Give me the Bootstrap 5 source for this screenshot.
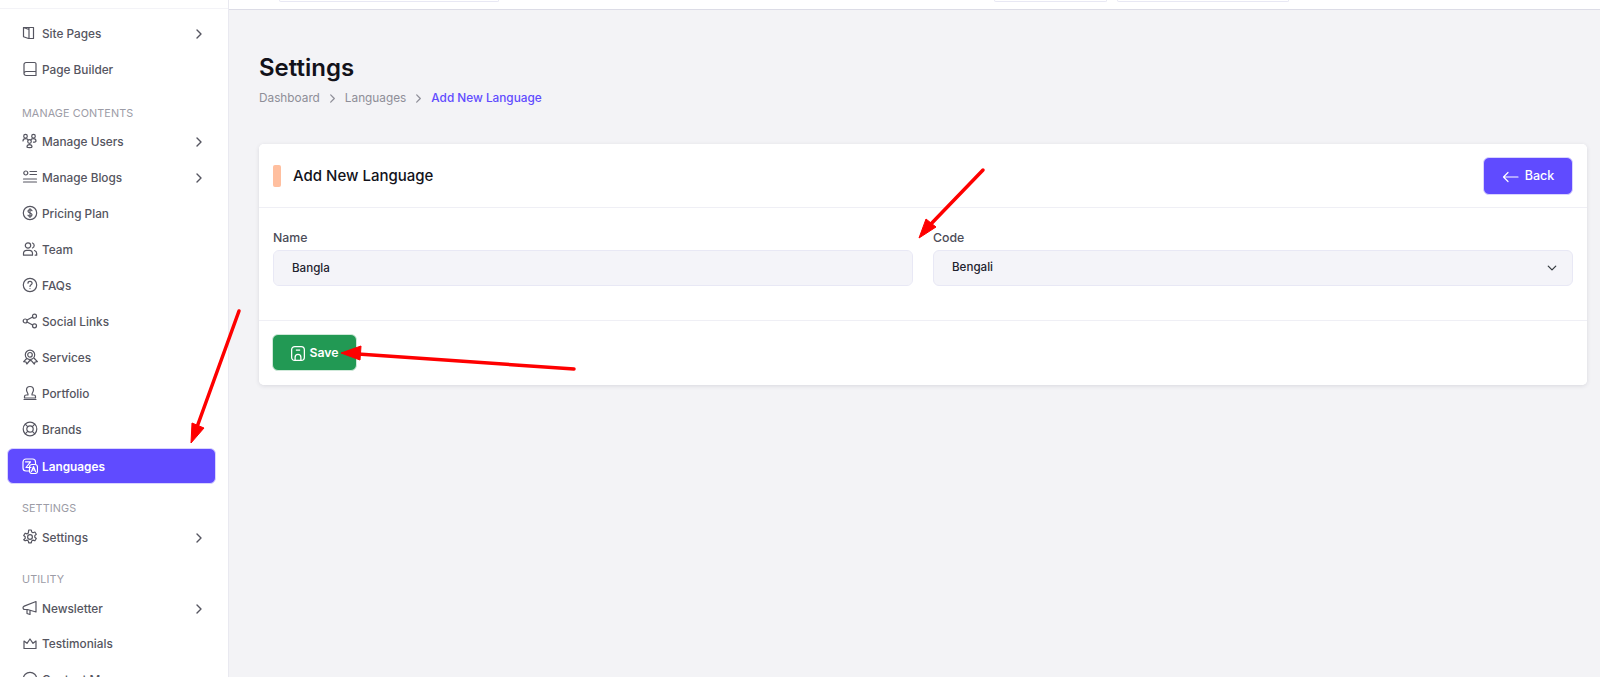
<!doctype html>
<html lang="en">
<head>
<meta charset="utf-8">
<title>Add New Language</title>
<link href="https://cdn.jsdelivr.net/npm/bootstrap@5.3.0/dist/css/bootstrap.min.css" rel="stylesheet">
<style>
html,body{height:677px;overflow:hidden}
body{font-family:Inter,"Liberation Sans",sans-serif;background:#f3f3f6;font-size:13px;color:#12121a}
.shell{height:677px;position:relative}
.side{width:229px;flex:none;background:#fff;border-right:1px solid #e9e9f0;height:677px;overflow:hidden;padding:0 12px 0 8px}
.side-top{height:9px;margin:0 -12px 7px -8px;border-bottom:1px solid #f3f3f7}
.side-item{display:flex;align-items:center;height:35px;margin-bottom:1px;padding:2px 14px 0;color:#555560;font-weight:500;font-size:11.8px;text-decoration:none;border-radius:6px;white-space:nowrap}
.side-item svg.ico{width:16px;height:16px;margin-right:4px;flex:none;fill:none;stroke:currentColor;stroke-width:1.2;stroke-linecap:round;stroke-linejoin:round;position:relative;top:-2px}
.side-item .chev{margin-left:auto;width:10px;height:10px;fill:none;stroke:#555560;stroke-width:1.4;stroke-linecap:round;stroke-linejoin:round;margin-right:-2px;position:relative;top:-1px}
.side-item.on{background:#604bff;color:#fff;border:1px solid #d9d4ff;font-weight:600;padding:3px 13px 0 14px;height:36px;margin:0 0 0 -1px}
.side-head{padding:0 14px;font-size:10.8px;line-height:18px;color:#9c9ca6;text-transform:uppercase;letter-spacing:.1px}
.h-a{padding-top:17px;padding-bottom:1px}
.h-b{padding-top:16px;padding-bottom:2px}
.h-c{padding-top:15px;padding-bottom:2px}
.tight{margin-bottom:0}
.main-col{min-width:0}
.topstrip{height:10px;background:#fff;border-bottom:1px solid #dcdce6;overflow:hidden;display:flex;padding-left:50px}
.stub{height:2px;background:#fff;border:1px solid #e8e8f4;border-top:0;border-radius:0 0 5px 5px}
.stub-a{width:220px}
.stub-b{width:113px;margin-left:auto}
.stub-c{width:172px;margin-left:10px;margin-right:311px}
.page-wrap{padding:40px 13px 0 30px}
.page-title{font-size:24px;font-weight:600;line-height:36px;margin:0 0 2px;color:#12121a}
.crumbs{margin:0 0 36px;font-size:11.8px;line-height:20px;align-items:center}
.crumbs .crumb-link{color:#8e8e98;text-decoration:none}
.crumbs .crumb-now{color:#604bff;font-weight:500}
.crumb-sep{width:9px;height:9px;margin:0 8px;fill:none;stroke:#8e8e98;stroke-width:1.4;stroke-linecap:round;stroke-linejoin:round}
.form-card{--bs-card-border-color:transparent;--bs-card-border-radius:5px;--bs-card-inner-border-radius:5px;box-shadow:0 1px 4px rgba(30,30,60,.12);border:0}
.form-card .card-header{height:64px;background:#fff;border-bottom:1px solid #efeff5;padding:0 14px 0;display:flex;align-items:center}
.tick{width:8px;height:22px;background:#ffbf9f;border-radius:2px;margin-right:12px}
.card-ttl{font-size:15px;font-weight:500;margin:0;color:#12121a}
.btn-back{height:38px;width:90px;background:#604bff;border:1px solid #d9d4ff;color:#fff;border-radius:6px;font-size:12.5px;font-weight:500;display:flex;align-items:center;justify-content:center;gap:6px;padding:2px 0 0}
.btn-back:hover{background:#604bff;color:#fff}
.btn-back svg{width:17px;height:12px;fill:none;stroke:#fff;stroke-width:1.2;stroke-linecap:round;stroke-linejoin:round}
.form-card .card-body{padding:20px 14px 0;height:112px;flex:none}
.fld-row{--bs-gutter-x:20px}
.fld-lbl{font-size:12.3px;font-weight:500;color:#4c4c58;line-height:20px;margin-bottom:2px}
.fld{height:36px;background-color:#f4f4f9;border:1px solid #e8e8f5;border-radius:6px;font-size:11.6px;font-weight:500;color:#22222e;padding:0 18px}
.form-select.fld{background-size:12px 10px;background-position:right 14px center}
.form-card .card-footer{background:#fff;border-top:1px solid #efeff5;padding:13px;height:65px}
.btn-save{height:37px;width:85px;background:#229954;border:1px solid #cfe9d9;color:#fff;border-radius:6px;font-size:12.3px;font-weight:600;display:flex;align-items:center;justify-content:center;gap:3px;padding:1px 0 0}
.btn-save:hover{background:#229954;color:#fff}
.btn-save svg{width:16px;height:17px;fill:none;stroke:#fff;stroke-width:1.2;stroke-linejoin:round}
.arrows{position:absolute;left:0;top:0;width:1600px;height:677px;pointer-events:none}
</style>
</head>
<body>
<div class="shell d-flex">
<nav class="side">
<div class="side-top"></div>
<a class="side-item" href="#"><svg class="ico" viewBox="0 0 16 16"><path d="M1.500 2.500h10v11H6.500l-5-1.800zM7 2.500v11M1.500 2.500L7 4.500v9"/></svg>Site Pages<svg class="chev" viewBox="0 0 10 10"><path d="M3 1l4 4-4 4"/></svg></a>
<a class="side-item" href="#"><svg class="ico" viewBox="0 0 16 16"><path d="M4 1.500h8.500a1.500 1.500 0 0 1 1.500 1.500v11.500H4a2 2 0 0 1-2-2V3.500A2 2 0 0 1 4 1.500zM2 12.500a2 2 0 0 1 2-2h10"/></svg>Page Builder</a>
<div class="side-head h-a">Manage Contents</div>
<a class="side-item" href="#"><svg class="ico" viewBox="0 0 16 16"><circle cx="3.500" cy="3.200" r="1.800"/><circle cx="11.500" cy="3.200" r="1.800"/><circle cx="7.500" cy="8.500" r="1.800"/><path d="M1 8c0-1.500 1-2.400 2.500-2.400S6 6.500 6 7M9 7c0-.5 1-1.400 2.500-1.400S14 6.500 14 8c0 .8-1 1.200-2.500 1.200M5 14c0-1.500 1-2.300 2.500-2.300S10 12.500 10 14c0 .8-5 .8-5 0z"/></svg>Manage Users<svg class="chev" viewBox="0 0 10 10"><path d="M3 1l4 4-4 4"/></svg></a>
<a class="side-item" href="#"><svg class="ico" viewBox="0 0 16 16"><circle cx="3.800" cy="4" r="2"/><path d="M8 2.500h6.500M8 5.500h6.500M1.500 10h13M1.500 13h13"/></svg>Manage Blogs<svg class="chev" viewBox="0 0 10 10"><path d="M3 1l4 4-4 4"/></svg></a>
<a class="side-item" href="#"><svg class="ico" viewBox="0 0 16 16"><circle cx="8" cy="8" r="6.700"/><path d="M10 5.700C9.600 5 9 4.700 8 4.700c-1.200 0-2 .6-2 1.600 0 2.200 4 1.200 4 3.400 0 1-.8 1.600-2 1.600-1 0-1.700-.4-2-1.100M8 3.600v8.800"/></svg>Pricing Plan</a>
<a class="side-item" href="#"><svg class="ico" viewBox="0 0 16 16"><circle cx="6" cy="4.500" r="2.700"/><path d="M1.500 14.200v-1.700c0-1.800 1.400-3.200 3.200-3.200h2.600c1.800 0 3.200 1.400 3.200 3.200v1.700zM10.500 2a2.700 2.700 0 0 1 0 5M12.500 9.500c1.300.4 2.200 1.600 2.200 3v1.700h-1.500"/></svg>Team</a>
<a class="side-item" href="#"><svg class="ico" viewBox="0 0 16 16"><circle cx="8" cy="8" r="6.700"/><path d="M6 6.200C6 5 7 4.400 8 4.400c1.200 0 2.100.8 2.100 1.900 0 1.500-2.100 1.500-2.100 3.100M8 11.500v.1"/></svg>FAQs</a>
<a class="side-item" href="#"><svg class="ico" viewBox="0 0 16 16"><circle cx="3.200" cy="8" r="2"/><circle cx="12.500" cy="3.200" r="2"/><circle cx="12.500" cy="12.800" r="2"/><path d="M5 7l5.700-3M5 9l5.700 3"/></svg>Social Links</a>
<a class="side-item" href="#"><svg class="ico" viewBox="0 0 16 16"><circle cx="8" cy="5.800" r="4.700"/><circle cx="8" cy="5.800" r="2.300"/><path d="M4.700 9.500l-3 3.200 2.300.3.800 2 3-3.500 1.500.1 3 3.400.8-2 2.300-.3-3-3.200"/></svg>Services</a>
<a class="side-item" href="#"><svg class="ico" viewBox="0 0 16 16"><path d="M2 14.500h12M2.500 11.500c0-1 .7-1.500 1.700-1.500H6c.5-1.500-1.500-3-1.500-5a3.500 3.500 0 0 1 7 0c0 2-2 3.500-1.500 5h1.800c1 0 1.700.5 1.700 1.500V13h-11z"/></svg>Portfolio</a>
<a class="side-item" href="#"><svg class="ico" viewBox="0 0 16 16"><circle cx="8" cy="8" r="6.800"/><circle cx="8" cy="8" r="3.200"/><path d="M3.200 3.200l2.500 2.500M12.800 3.200l-2.500 2.500M3.200 12.800l2.500-2.500M12.800 12.800l-2.500-2.500"/></svg>Brands</a>
<a class="side-item on" href="#"><svg class="ico" viewBox="0 0 16 16"><path d="M4 1h6.500a3 3 0 0 1 3 3v1.500M4 1a3 3 0 0 0-3 3v6a3 3 0 0 0 3 3h3.500M3.500 3.800h5L4 9.500h5"/><rect x="7.500" y="6.500" width="8" height="9" rx="2.500"/><path d="M9.500 13.500l2-5 2 5M10.200 12h2.600"/></svg>Languages</a>
<div class="side-head h-b">Settings</div>
<a class="side-item" href="#"><svg class="ico" viewBox="0 0 16 16"><circle cx="8" cy="8" r="2.400"/><path d="M6.700 1h2.600l.4 2 1.300.7 1.900-.7 1.400 2.300-1.500 1.300v1.600l1.500 1.300-1.400 2.300-1.900-.7-1.300.8-.4 2H6.700l-.4-2-1.300-.8-1.900.7L1.700 10.700 3.200 9.400V7.800L1.700 6.500 3.100 4.200l1.900.7 1.300-.8z"/></svg>Settings<svg class="chev" viewBox="0 0 10 10"><path d="M3 1l4 4-4 4"/></svg></a>
<div class="side-head h-c">Utility</div>
<a class="side-item tight" href="#"><svg class="ico" viewBox="0 0 16 16"><path d="M14 1.500v10.500L5.500 9.500H2.700c-1 0-1.700-.8-1.700-1.700 0-.8.500-1.400 1.200-1.700zM5 9.500v4l3 1v-4"/></svg>Newsletter<svg class="chev" viewBox="0 0 10 10"><path d="M3 1l4 4-4 4"/></svg></a>
<a class="side-item" href="#"><svg class="ico" viewBox="0 0 16 16"><path d="M2 13.500V6l3 2.300L8 4l3 4.300L14 6v7.500z"/></svg>Testimonials</a>
<a class="side-item" href="#"><svg class="ico" viewBox="0 0 16 16"><circle cx="8" cy="8" r="6.700"/></svg>Contact Messages</a>
</nav>
<div class="main-col flex-grow-1">
<div class="topstrip"><div class="stub stub-a"></div><div class="stub stub-b"></div><div class="stub stub-c"></div></div>
<main class="page-wrap">
<h1 class="page-title">Settings</h1>
<div class="crumbs d-flex">
<a class="crumb-link" href="#">Dashboard</a><svg class="crumb-sep" viewBox="0 0 10 10"><path d="M3 1l4 4-4 4"/></svg><a class="crumb-link" href="#">Languages</a><svg class="crumb-sep" viewBox="0 0 10 10"><path d="M3 1l4 4-4 4"/></svg><span class="crumb-now">Add New Language</span>
</div>
<div class="card form-card">
<div class="card-header"><span class="tick"></span><h2 class="card-ttl">Add New Language</h2>
<a class="btn btn-back ms-auto" href="#"><svg viewBox="0 0 17 12"><path d="M16 6H1.500M6 1.500L1.500 6 6 10.500"/></svg>Back</a></div>
<div class="card-body">
<div class="row fld-row">
<div class="col-6"><label class="form-label fld-lbl d-block">Name</label><input class="form-control fld" value="Bangla"></div>
<div class="col-6"><label class="form-label fld-lbl d-block">Code</label><select class="form-select fld"><option>Bengali</option></select></div>
</div>
</div>
<div class="card-footer"><button class="btn btn-save" type="button"><svg viewBox="0 0 15 16"><rect x="1.500" y="1.500" width="12" height="13" rx="3"/><path d="M4.800 14.500v-3a2.700 2.700 0 0 1 5.400 0v3M5.500 4.800h4"/></svg>Save</button></div>
</div>
</main>
</div>
<svg class="arrows" viewBox="0 0 1600 677">
<g fill="#fe0000" stroke="#fe0000" stroke-linejoin="round">
<path d="M239 311L197 427" stroke-width="3.500" stroke-linecap="round"/><path d="M191 443l1-20 12 5z" stroke-width="1"/>
<path d="M983 170L929 226" stroke-width="3.500" stroke-linecap="round"/><path d="M919 238l7-19 10 8z" stroke-width="1"/>
<path d="M574 369L358 354" stroke-width="3.500" stroke-linecap="round"/><path d="M341 353l20-7-1 14z" stroke-width="1"/>
</g>
</svg>
</div>
<script src="https://cdn.jsdelivr.net/npm/bootstrap@5.3.0/dist/js/bootstrap.bundle.min.js"></script>
</body>
</html>
